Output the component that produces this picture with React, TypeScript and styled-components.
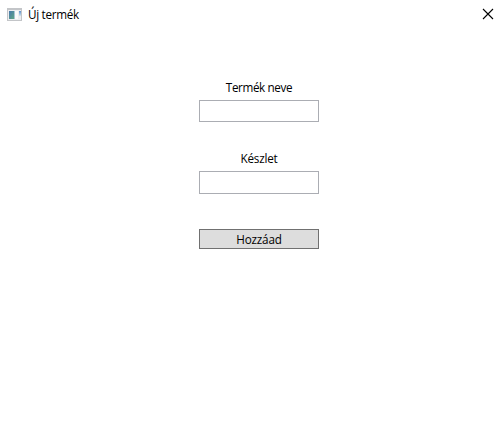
import React from "react";
import styled, { createGlobalStyle } from "styled-components";

const GlobalStyle = createGlobalStyle`
  * { box-sizing: border-box; }
  body { margin: 0; background: #fff; }
`;

const Window = styled.div`
  display: flex;
  flex-direction: column;
  width: 502px;
  height: 440px;
  background: #fff;
  color: #000;
  font: 11.7px/16px "Segoe UI", "Open Sans", "Noto Sans", sans-serif;
  letter-spacing: -0.2px;
`;

const TitleBar = styled.header`
  display: flex;
  align-items: center;
  height: 30px;
  padding: 0 8px 2px 7px;
`;

const Title = styled.span`
  flex: 1;
  margin-left: 6px;
  letter-spacing: -0.3px;
`;

const CloseButton = styled.button`
  display: flex;
  padding: 0;
  border: 0;
  background: none;
`;

const Form = styled.form`
  display: flex;
  flex-direction: column;
  width: 120px;
  margin: 49px 0 0 199px;
`;

const Field = styled.label<{ $gap: number; $spacing?: number }>`
  display: flex;
  flex-direction: column;
  gap: 5px;
  margin-bottom: ${(p) => p.$gap}px;
  text-align: center;
  letter-spacing: ${(p) => p.$spacing ?? -0.2}px;
`;

const Input = styled.input<{ $height: number }>`
  width: 120px;
  height: ${(p) => p.$height}px;
  padding: 0 3px;
  border: 1px solid #abadb3;
  border-radius: 0;
  background: #fff;
  font: inherit;
  outline: none;
`;

const SubmitButton = styled.button`
  height: 20px;
  padding: 0 0 1px;
  border: 1px solid #707070;
  border-radius: 0;
  background: #ddd;
  color: #000;
  font: inherit;
  letter-spacing: -0.2px;
`;

const AppIcon = () => (
  <svg width="15" height="13" viewBox="0 0 15 13" shapeRendering="crispEdges">
    <defs>
      <linearGradient id="pane" x1="0" y1="0" x2="1" y2="1">
        <stop offset="0" stopColor="#4878ae" />
        <stop offset="1" stopColor="#62aa80" />
      </linearGradient>
      <linearGradient id="side" x1="0" y1="0" x2="0" y2="1">
        <stop offset="0" stopColor="#5b90cb" />
        <stop offset="1" stopColor="#d6e6ee" />
      </linearGradient>
    </defs>
    <rect width="15" height="13" fill="#c3c5c8" />
    <rect x="1" y="2" width="13" height="10" fill="#ededf0" />
    <rect x="2" y="3" width="6" height="8" fill="url(#pane)" />
    <rect x="7" y="3" width="1" height="8" fill="#a9c3d3" />
    <rect x="8" y="3" width="3" height="8" fill="#fafafa" />
    <rect x="12" y="3" width="2" height="5" fill="url(#side)" />
  </svg>
);

const CloseIcon = () => (
  <svg width="12" height="12" viewBox="0 0 12 12">
    <path d="M1 1L11 11M11 1L1 11" fill="none" stroke="#000" strokeWidth="1.1" />
  </svg>
);

export default function App() {
  return (
    <Window>
      <GlobalStyle />
      <TitleBar>
        <AppIcon />
        <Title>Új termék</Title>
        <CloseButton type="button" aria-label="Bezárás">
          <CloseIcon />
        </CloseButton>
      </TitleBar>
      <Form onSubmit={(e) => e.preventDefault()}>
        <Field $gap={28} $spacing={-0.38}>
          Termék neve
          <Input $height={22} />
        </Field>
        <Field $gap={35}>
          Készlet
          <Input $height={23} />
        </Field>
        <SubmitButton type="submit">Hozzáad</SubmitButton>
      </Form>
    </Window>
  );
}
